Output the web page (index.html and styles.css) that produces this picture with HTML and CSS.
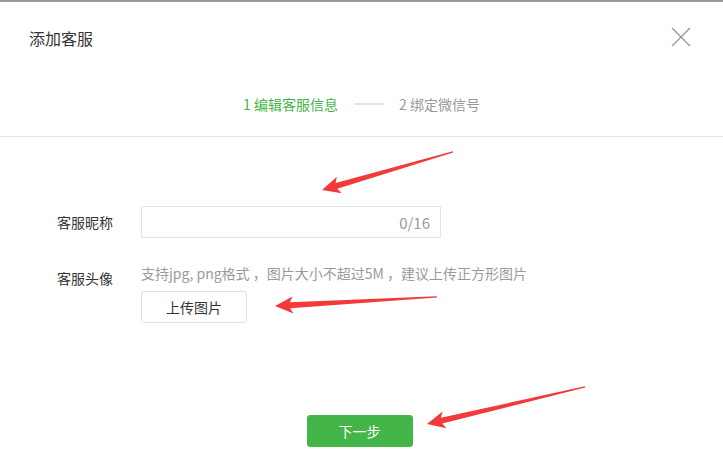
FILE: index.html
```html
<!DOCTYPE html>
<html lang="zh-CN">
<head>
<meta charset="utf-8">
<title>添加客服</title>
<link rel="stylesheet" href="styles.css">
</head>
<body>
<div class="dialog">
  <div class="header">
    <h1 class="title">添加客服</h1>
    <svg class="close" width="20" height="20" viewBox="0 0 20 20"><path d="M1 1 L19 19 M19 1 L1 19" stroke="#9a9a9a" stroke-width="1.4" fill="none"/></svg>
  </div>
  <div class="steps">
    <span class="step active">1 编辑客服信息</span>
    <span class="step-line"></span>
    <span class="step">2 绑定微信号</span>
  </div>
  <div class="body">
    <div class="row">
      <div class="label">客服昵称</div>
      <div class="field">
        <div class="input"><span class="count">0/16</span></div>
      </div>
    </div>
    <div class="row row-avatar">
      <div class="label">客服头像</div>
      <div class="field">
        <div class="hint">支持jpg, png格式 ，图片大小不超过5M ，建议上传正方形图片</div>
        <button class="btn">上传图片</button>
      </div>
    </div>
  </div>
  <div class="footer">
    <button class="btn btn-primary">下一步</button>
  </div>
  <svg class="arrows" width="723" height="471" viewBox="0 0 723 471">
    <g fill="#f23a3a">
      <polygon transform="translate(322 190) rotate(-16.2)" points="0,0 18,-8.5 15,-3 136.4,-0.6 136.4,0.6 15,3 18,8.5"/>
      <polygon transform="translate(275 306) rotate(-3.2)" points="0,0 18,-8.5 15,-3 162.2,-0.6 162.2,0.6 15,3 18,8.5"/>
      <polygon transform="translate(427 424) rotate(-13.2)" points="0,0 18,-8.5 15,-3 162.3,-0.6 162.3,0.6 15,3 18,8.5"/>
    </g>
  </svg>
</div>
</body>
</html>
```
FILE: styles.css
```css
* { box-sizing: border-box; }
html, body { margin: 0; padding: 0; background: #fff; }
body {
  font-family: "Noto Sans CJK SC", "Liberation Sans", sans-serif;
  font-size: 14px;
  color: #333;
}
.dialog {
  position: relative;
  width: 723px;
  height: 471px;
  border-top: 2px solid #979797;
}
.header {
  height: 76px;
  display: flex;
  align-items: center;
  justify-content: space-between;
  padding: 0 32px 4px 29px;
}
.title {
  margin: 0;
  font-size: 16px;
  font-weight: normal;
  color: #353535;
  line-height: 24px;
}
.close { display: block; margin-top: -3px; }
.steps {
  height: 59px;
  padding-bottom: 7px;
  display: flex;
  align-items: center;
  justify-content: center;
  border-bottom: 1px solid #e7e7e7;
}
.step { color: #9a9a9a; line-height: 20px; }
.step.active { color: #44b549; }
.step-line {
  width: 30px;
  height: 2px;
  background: #e4e8eb;
  margin: 0 15px 0 16px;
}
.body { padding: 69px 0 0 57px; }
.row { display: flex; align-items: flex-start; }
.label { width: 84px; line-height: 32px; color: #333; }
.input {
  width: 300px;
  height: 32px;
  border: 1px solid #e4e4e4;
  display: flex;
  align-items: center;
  justify-content: flex-end;
  padding-right: 10px;
}
.count { color: #9a9a9a; font-size: 15px; }
.row-avatar { margin-top: 24px; }
.hint { color: #9a9a9a; line-height: 22px; }
.btn {
  display: block;
  width: 106px;
  height: 32px;
  margin-top: 7px;
  padding: 0;
  border: 1px solid #e0e0e0;
  border-radius: 3px;
  background: #fff;
  font-family: inherit;
  font-size: 14px;
  color: #353535;
}
.footer {
  display: flex;
  justify-content: center;
  padding: 85px 4px 0 0;
}
.btn-primary {
  background: #44b549;
  border-color: #44b549;
  color: #fff;
}
.arrows {
  position: absolute;
  top: -2px;
  left: 0;
  pointer-events: none;
}
```
